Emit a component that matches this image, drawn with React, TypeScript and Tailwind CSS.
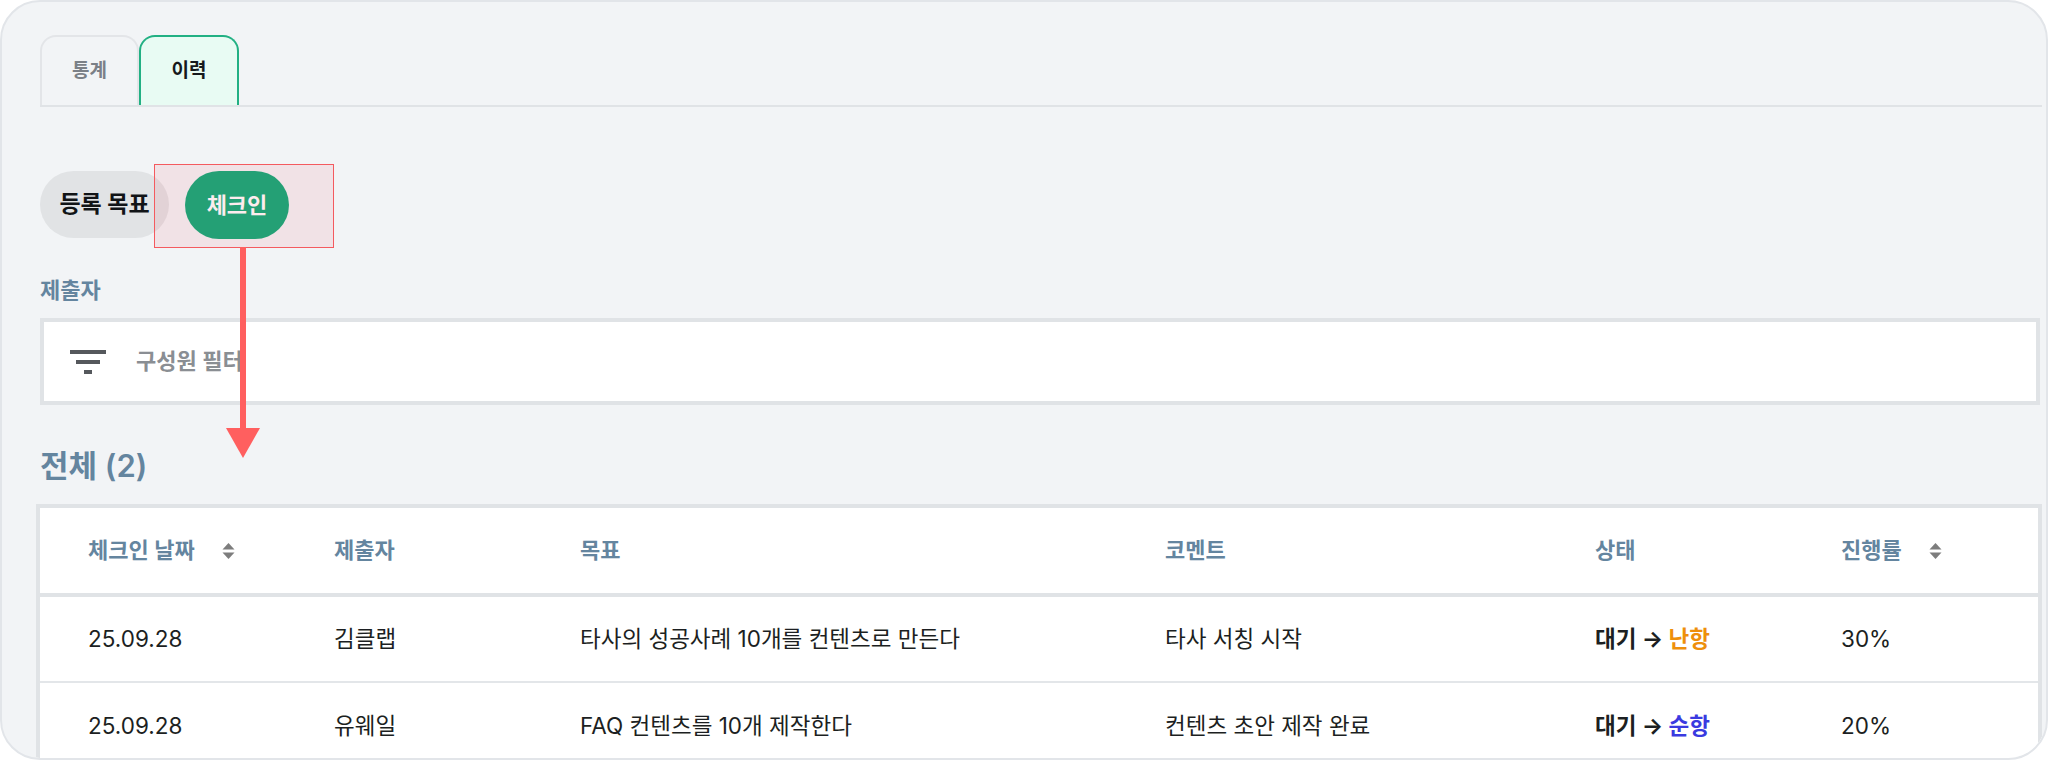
const FONT = "font-['Inter','Noto_Sans_CJK_KR',sans-serif]";

function SortIcon() {
  return (
    <svg className="w-[13px] h-[18px] ml-[27px] shrink-0" viewBox="0 0 13 18" fill="#7d7d7d">
      <path d="M6.5 1 L12.5 7.5 H0.5 Z" />
      <path d="M6.5 17 L12.5 10.5 H0.5 Z" />
    </svg>
  );
}

function Th({ label, sort, className }: { label: string; sort?: boolean; className: string }) {
  return (
    <th className={`text-left font-semibold p-0 ${className}`}>
      <div className="flex items-center">
        {label}
        {sort && <SortIcon />}
      </div>
    </th>
  );
}

const rows = [
  { date: "25.09.28", name: "김클랩", goal: "타사의 성공사례 10개를 컨텐츠로 만든다", comment: "타사 서칭 시작", to: "난항", color: "text-[#ee8f0b]", rate: "30%" },
  { date: "25.09.28", name: "유웨일", goal: "FAQ 컨텐츠를 10개 제작한다", comment: "컨텐츠 초안 제작 완료", to: "순항", color: "text-[#3a3ae0]", rate: "20%" },
];

export default function App() {
  return (
    <div className={`relative w-[2048px] h-[760px] overflow-hidden bg-white ${FONT}`}>
      <div className="h-[760px] bg-[#f2f4f6] rounded-[40px] border-2 border-[#e2e5e9] pt-[33px] pl-[38px] pr-[6px] overflow-hidden">
        {/* tabs */}
        <div className="flex mr-[-2px] h-[72px] border-b-2 border-[#e0e3e6]">
          <div className="w-[99px] h-[70px] rounded-t-[16px] border-2 border-b-0 border-[#e3e5e8] flex items-center justify-center text-[19px] font-semibold text-[#7b8087]">통계</div>
          <div className="w-[100px] h-[70px] rounded-t-[16px] border-2 border-b-0 border-[#22b083] bg-[#e8fbf3] flex items-center justify-center text-[19px] font-bold text-[#16191c]">이력</div>
        </div>

        {/* pills */}
        <div className="flex gap-[16px] mt-[64px]">
          <div className="w-[129px] h-[67px] rounded-full bg-[#e1e3e5] flex items-center justify-center text-[23px] font-bold text-[#111417]">등록 목표</div>
          <div className="w-[104px] h-[68px] rounded-full bg-[#0eab79] flex items-center justify-center text-[22px] font-bold text-white">체크인</div>
        </div>

        <p className="mt-[37px] text-[22px] leading-[28px] font-semibold text-[#64859f]">제출자</p>

        {/* filter */}
        <div className="mt-[14px] h-[87px] bg-white border-4 border-[#e0e3e6] flex items-center pl-[26px]">
          <svg className="w-[36px] h-[24px] shrink-0" viewBox="0 0 36 24" fill="#55585c">
            <rect x="0" y="0" width="36" height="4" />
            <rect x="6" y="10" width="24" height="4" />
            <rect x="14" y="20" width="8" height="4" />
          </svg>
          <span className="ml-[30px] text-[22px] font-semibold text-[#8a8e93]">구성원 필터</span>
        </div>

        <h2 className="mt-[42px] text-[31px] leading-[38px] font-semibold text-[#64859f]">전체 (2)</h2>

        {/* table */}
        <div className="mt-[19px] ml-[-4px] mr-[-2px] bg-white border-4 border-b-0 border-[#e0e3e6]">
          <table className="w-full border-collapse table-fixed">
            <thead>
              <tr className="h-[87px] border-b-4 border-[#e0e3e6] text-[22px] text-[#64859f]">
                <Th label="체크인 날짜" sort className="w-[294px] pl-[48px]" />
                <Th label="제출자" className="w-[246px]" />
                <Th label="목표" className="w-[585px]" />
                <Th label="코멘트" className="w-[430px]" />
                <Th label="상태" className="w-[246px]" />
                <Th label="진행률" sort className="" />
              </tr>
            </thead>
            <tbody className="text-[22.5px] text-[#1c1f22]">
              {rows.map((r) => (
                <tr key={r.name} className="h-[87px] border-b-2 border-[#e3e6e9]">
                  <td className="pl-[48px]">{r.date}</td>
                  <td>{r.name}</td>
                  <td>{r.goal}</td>
                  <td>{r.comment}</td>
                  <td className="font-bold">
                    대기 → <span className={r.color}>{r.to}</span>
                  </td>
                  <td>{r.rate}</td>
                </tr>
              ))}
            </tbody>
          </table>
        </div>
      </div>

      {/* annotation overlay */}
      <div className="absolute left-[154px] top-[164px] w-[180px] h-[84px] border border-[#f45a5f] bg-[#f0475a]/10" />
      <svg className="absolute left-[225px] top-[247px] w-[36px] h-[212px]" viewBox="0 0 36 212">
        <rect x="15" y="0" width="6" height="185" fill="#ff5f5f" />
        <path d="M1 181 H35 L18 211 Z" fill="#ff5f5f" />
      </svg>
    </div>
  );
}
